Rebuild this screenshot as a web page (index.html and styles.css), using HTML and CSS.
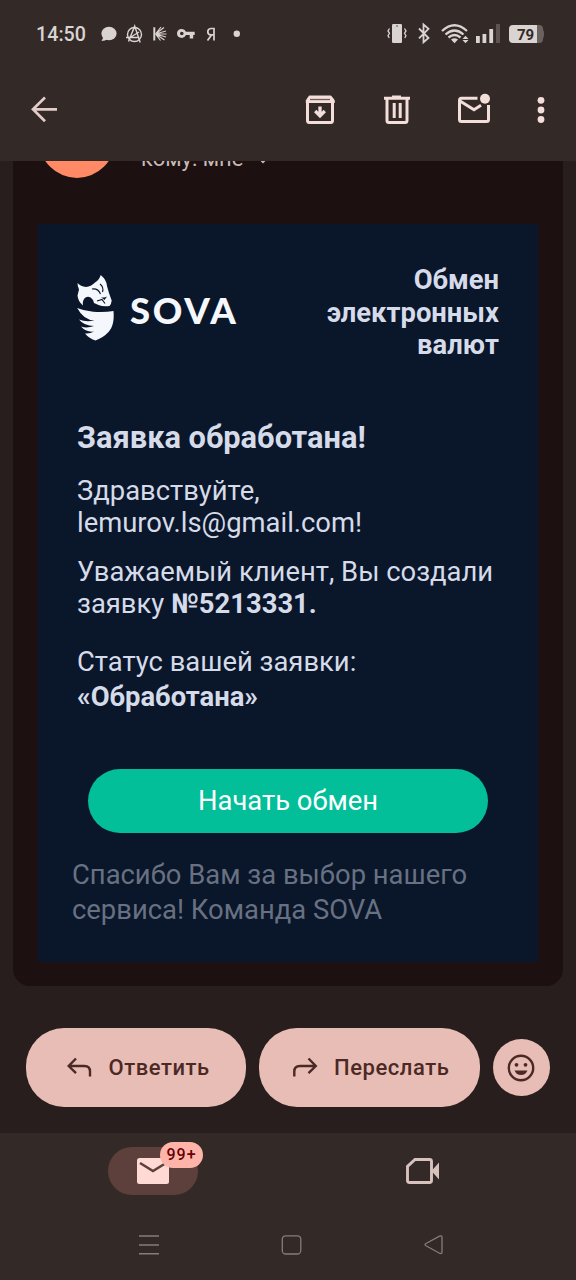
FILE: index.html
```html
<!DOCTYPE html>
<html lang="ru">
<head>
<meta charset="utf-8">
<title>Заявка обработана</title>
<link rel="stylesheet" href="styles.css">
</head>
<body>
<div class="screen">
  <header class="top">
    <div class="status">
      <span class="clock">14:50</span>
      <svg class="notes" viewBox="98 20 146 28" width="146" height="28">
        <g fill="#d9d4d2">
          <ellipse cx="109" cy="33.500" rx="7.600" ry="6.800"/><path d="M102 35l1 3-1.500 3q4 0 6-2z"/>
          <path d="M177 33.500a4.700 4.700 0 0 1 9-1.700h8.700v3.300h-1.500v3.400h-3.500v-3.400h-3.700a4.700 4.700 0 0 1-9-1.600zm3 0a1.800 1.800 0 1 0 3.600 0a1.800 1.800 0 0 0-3.600 0z" fill-rule="evenodd"/>
          <circle cx="236.800" cy="33.800" r="3.200"/>
        </g>
        <g fill="none" stroke="#d9d4d2" stroke-width="1.400">
          <circle cx="134.500" cy="34.500" r="7"/>
          <path d="M128.500 41.500L134.700 26l5.500 16.500M126 37.500h13.500M135 26l-5 11.500M131 37l8-5"/>
          <path d="M154.300 27.300v13.200" stroke-width="2"/>
          <path d="M155.500 34L164 27.500M155.500 34h11M155.500 34L164.500 40M155.500 34l5.500-7M155.500 34l5 6.500M155.500 34L166 31M155.500 34L166 37" stroke-width="1.200"/>
          <path d="M214 27.800v12.800M214 28.500h-3.200q-3 .3-3 3.200t3 3.200h3.200M211.500 35l-4 5.500" stroke-width="1.700"/>
        </g>
      </svg>
      <svg class="signals" viewBox="384 20 162 28" width="162" height="28">
        <g fill="#d9d4d2">
          <rect x="392" y="24" width="10" height="19" rx="1.200"/>
          <rect x="476" y="36" width="3.800" height="7"/><rect x="482.500" y="34" width="3.800" height="9"/><rect x="489.300" y="29" width="3.800" height="14"/>
          <path d="M451 39.500q3.500-2.500 7 0l-3.500 3.700zM462.500 39h6l-3-3.200zM462.500 40h6l-3 3.200z"/>
        </g>
        <rect x="496" y="24" width="4" height="19" fill="#5d5351"/>
        <g fill="none" stroke="#d9d4d2">
          <path d="M389.500 28.500l-1.500 2.400 1.500 2.400-1.500 2.400 1.300 2.300M404.500 28.500l1.500 2.400-1.500 2.400 1.500 2.400-1.300 2.300" stroke-width="1.300"/>
          <path d="M419 28.500l9.500 9.500-5 4.300V24.500l5 4.300-9.500 9.500" stroke-width="1.800"/>
          <path d="M442 31q12.500-11.500 25 0M445.500 34.500q9-8 18 0M448.500 37.500q6-5 12 0" stroke-width="2.300"/>
        </g>
        <rect x="396" y="25.500" width="2" height="1" fill="#5d5351"/>
        <path d="M536 25h3a4 4 0 0 1 4 4q2 5 0 10a4 4 0 0 1-4 4h-3z" fill="#6b6260"/>
        <path d="M513 25h24v18h-24a4 4 0 0 1-4-4V29a4 4 0 0 1 4-4z" fill="#d9d4d2"/>
        <text class="battery" x="517" y="39.700">79</text>
      </svg>
    </div>
    <div class="toolbar">
      <svg viewBox="28 94 32 32" width="32" height="32"><path d="M57 109.300H33M45 97.500L33 109.300l12 12" fill="none" stroke="#e3cbc7" stroke-width="2.700"/></svg>
      <span class="fill"></span>
      <svg class="archive" viewBox="304 94 32 32" width="32" height="32">
        <path d="M307.500 101.500v19q0 2 2 2h21q2 0 2-2v-19" fill="none" stroke="#f3deda" stroke-width="3"/>
        <path d="M309.500 95.500h21q1 0 4.300 5v2.500h-29V100.500q3-5 3.700-5z" fill="#f3deda"/>
        <path d="M310 99.500h20" stroke="#6b5c5a" stroke-width="1.300"/>
        <path d="M320 106.500v9M315.200 111l4.800 4.800 4.800-4.800" fill="none" stroke="#f3deda" stroke-width="3.300"/>
      </svg>
      <svg class="trash" viewBox="382 94 30 32" width="30" height="32"><path d="M384 98.300h26M392 97h9M387 98v22.500q0 2 2 2h16q2 0 2-2V98M394.200 103v15M400.200 103v15" fill="none" stroke="#f3deda" stroke-width="3"/></svg>
      <svg class="unread" viewBox="456 92 36 34" width="36" height="34"><path d="M477.500 98.300h-16q-2 0-2 2V119.500q0 2 2 2h25q2 0 2-2v-14.500M460 101l14 8.800 7-4.500" fill="none" stroke="#f3deda" stroke-width="3"/><circle cx="485" cy="98.800" r="5" fill="#f3deda"/></svg>
      <svg class="dots" viewBox="534 94 14 32" width="14" height="32"><g fill="#f3deda"><circle cx="541" cy="100.300" r="3.400"/><circle cx="541" cy="110" r="3.400"/><circle cx="541" cy="119.500" r="3.400"/></g></svg>
    </div>
  </header>

  <main class="card">
    <div class="sender">
      <span class="avatar"></span>
      <span class="to">кому: мне</span>
      <svg class="caret" viewBox="0 0 10 7" width="10" height="7"><path d="M1 1l4 4 4-4" fill="none" stroke="#c9bbb8" stroke-width="2"/></svg>
    </div>
    <article class="letter">
      <div class="brand">
        <svg class="owl" viewBox="76 275 40 67" width="40" height="67">
          <path fill="#f4f7fb" d="M77.200 308q7 3 16 3.700 11 .8 20.300-.7c.8 9-.5 16-5 21q-5 5.500-13 8.500-7-2.500-10.500-7 5 .5 9-2-8 1-13-5 6 2 13-.5-10 0-15-6.500 7 3 15.500 1-11-.5-17.300-12.500z"/>
          <path fill="#f4f7fb" fill-rule="evenodd" d="M77.500 283q3 3.500 8.500 4 5-.5 9-4.500 4.500-3 5.700-7.500 6 5 6.300 11l2 7 2.700 7.500q-.3 3.500-2.200 5.500-6 1-11-1l-4.500-2-1-3q-3-4.500-6.500-3-4.500 2-3.500 8.500-5-4-5.500-10l1.500-6q-1.500-3-1.500-6.500zM101 297q3 1.300 6-.5l-2.500 3.500z"/>
          <path fill="none" stroke="#0a162a" stroke-width="1.100" d="M92 289q6-1 8.500 5M100 284q4 3 2.500 8M97 301l5-1.500 3 4"/>
        </svg>
        <span class="name">SOVA</span>
        <div class="tagline">Обмен<br>электронных<br>валют</div>
      </div>
      <h1 class="title">Заявка обработана!</h1>
      <p class="hello">Здравствуйте,<br><span class="mail">lemurov.ls@gmail.com!</span></p>
      <p class="order">Уважаемый клиент, Вы создали<br>заявку <b>№5213331.</b></p>
      <p class="state">Статус вашей заявки:<br><b>«Обработана»</b></p>
      <a class="cta">Начать обмен</a>
      <p class="thanks">Спасибо Вам за выбор нашего<br>сервиса! Команда SOVA</p>
    </article>
  </main>

  <div class="actions">
    <button class="pill"><svg viewBox="66 1056 28 24" width="28" height="24"><path d="M76 1058.500l-7.300 7.500 7.300 7.200M69 1066h15.500q5.500 0 5.500 5.500v5" fill="none" stroke="#4b2924" stroke-width="2.400"/></svg><span class="reply">Ответить</span></button>
    <button class="pill"><svg viewBox="291 1056 28 24" width="28" height="24"><path d="M308.500 1058.500l7.300 7.500-7.300 7.200M315.500 1066h-15.500q-5.700 0-5.700 5.500v5" fill="none" stroke="#4b2924" stroke-width="2.400"/></svg><span class="forward">Переслать</span></button>
    <button class="emoji"><svg viewBox="0 0 28 28" width="28" height="28"><circle cx="14" cy="14" r="12.200" fill="none" stroke="#4b2924" stroke-width="2.400"/><circle cx="9.500" cy="10.800" r="1.900" fill="#4b2924"/><circle cx="18.500" cy="10.800" r="1.900" fill="#4b2924"/><path d="M7.500 16.500h13q-2 4.500-6.500 4.500t-6.500-4.500z" fill="#4b2924"/></svg></button>
  </div>

  <footer class="bottom">
    <nav class="tabs">
      <div class="tab-mail">
        <svg viewBox="0 0 32 26" width="32" height="26"><rect width="32" height="26" rx="2.500" fill="#ffdad5"/><path d="M3 5l13 8 13-8" fill="none" stroke="#5d403b" stroke-width="2.600"/></svg>
        <span class="badge">99+</span>
      </div>
      <svg class="meet" viewBox="405 1157 36 28" width="36" height="28"><path d="M415 1159.500h14.500q2 0 2 2v19q0 2-2 2h-20q-2 0-2-2v-14z" fill="none" stroke="#d8c2be" stroke-width="2.900"/><path d="M431.500 1171l7.500-8.500v17z" fill="#d8c2be"/></svg>
    </nav>
    <nav class="system">
      <svg viewBox="138 1234 22 22" width="22" height="22"><path d="M139 1236h20M139 1245h20M139 1253.700h20" stroke="#857d7b" stroke-width="1.500"/></svg>
      <svg viewBox="280 1234 22 22" width="22" height="22"><rect x="282.300" y="1235.800" width="18.500" height="18.200" rx="3.500" fill="none" stroke="#857d7b" stroke-width="1.300"/></svg>
      <svg viewBox="422 1234 22 22" width="22" height="22"><path d="M426 1243.500l13.500-7.300q2.500-1 2.500 1v15q0 2-2.500 1l-13.500-7.500q-2-1.200 0-2.200z" fill="none" stroke="#857d7b" stroke-width="1.300"/></svg>
    </nav>
  </footer>
</div>
</body>
</html>
```
FILE: styles.css
```css
* { box-sizing: border-box; }
body { margin: 0; background: #271e1d; font-family: Roboto, "Liberation Sans", sans-serif; }
svg { display: block; flex: none; }
p, h1 { margin: 0; white-space: nowrap; }
.screen { width: 576px; height: 1280px; display: flex; flex-direction: column; overflow: hidden; }

.top { height: 161px; flex: none; background: #332927; }
.status { height: 68px; display: flex; align-items: center; padding-left: 36px; }
.clock { width: 62px; font-size: 19.7px; font-weight: 500; color: #d9d4d2; white-space: nowrap; }
.signals { margin-left: 140px; }
.battery { font: 700 15px Roboto, sans-serif; fill: #332927; }
.toolbar { height: 84px; display: flex; align-items: center; padding: 0 28px; }
.fill { flex: 1; }
.trash { margin-left: 46px; }
.unread { margin: 0 42px 2px 44px; }

.card { width: 550px; height: 825px; flex: none; margin-left: 13px; padding: 0 25px; background: #1c1110; border-radius: 0 0 17px 17px; overflow: hidden; }
.sender { height: 79px; margin-top: -62px; padding-left: 1px; display: flex; align-items: center; }
.avatar { width: 76px; height: 76px; margin-top: 3px; border-radius: 50%; background: #ff8a65; flex: none; }
.to { margin: 41px 0 0 26px; width: 117px; line-height: 26px; font-size: 22px; color: #c9bbb8; }
.caret { margin-top: 43px; }
.letter { height: 738px; margin-top: 46px; padding: 40px 39px 0; width: 500px; background: #0a162a; color: #d5dbe9; font-size: 27.4px; }

.brand { display: flex; align-items: flex-start; height: 97px; }
.owl { margin: 11px 0 0 -1px; overflow: visible; }
.name { margin: 23px 0 0 14px; font: 900 36.5px/46px Lato, sans-serif; letter-spacing: 2.7px; color: #f4f7fb; }
.tagline { margin-left: auto; text-align: right; font-size: 27.4px; font-weight: 700; line-height: 32.5px; }
.title { margin-top: 59px; font-size: 30.8px; line-height: 36px; font-weight: 700; }
.hello { margin-top: 19px; line-height: 32px; }
.order { margin-top: 17px; line-height: 32px; }
.state { margin-top: 25px; line-height: 35px; }
.cta { display: flex; align-items: center; justify-content: center; width: 400px; height: 64px; margin: 54px 0 0 11px; border-radius: 32px; background: #02bf9a; color: #fff; }
.thanks { margin: 25px 0 0 -5px; line-height: 35px; color: #687182; }

.actions { height: 147px; flex: none; display: flex; align-items: center; gap: 13px; padding: 16px 0 0 25.5px; }
.pill { display: flex; align-items: center; gap: 15px; width: 220.5px; height: 79px; padding: 0 0 0 40px; border: 0; border-radius: 38px; background: #e8bdb6; color: #4b2924; font: 500 22px Roboto, sans-serif; letter-spacing: .55px; }
.pill + .pill { padding-left: 32px; }
.emoji { display: flex; align-items: center; justify-content: center; width: 57.5px; height: 57.5px; padding: 0; border: 0; border-radius: 50%; background: #e8bdb6; }

.bottom { height: 147px; flex: none; background: #332927; }
.tabs { display: flex; align-items: center; height: 76px; padding-left: 108px; }
.tab-mail { position: relative; display: flex; align-items: center; justify-content: center; width: 90px; height: 48px; border-radius: 24px; background: #5d403b; }
.badge { position: absolute; left: 52px; top: -5px; width: 43px; height: 26px; border-radius: 13px; background: #ffb4aa; color: #690005; font: 500 16px/26px Roboto, sans-serif; letter-spacing: 1px; text-align: center; }
.meet { margin-left: 207px; }
.system { display: flex; gap: 120px; padding: 25px 0 0 138px; }
```
